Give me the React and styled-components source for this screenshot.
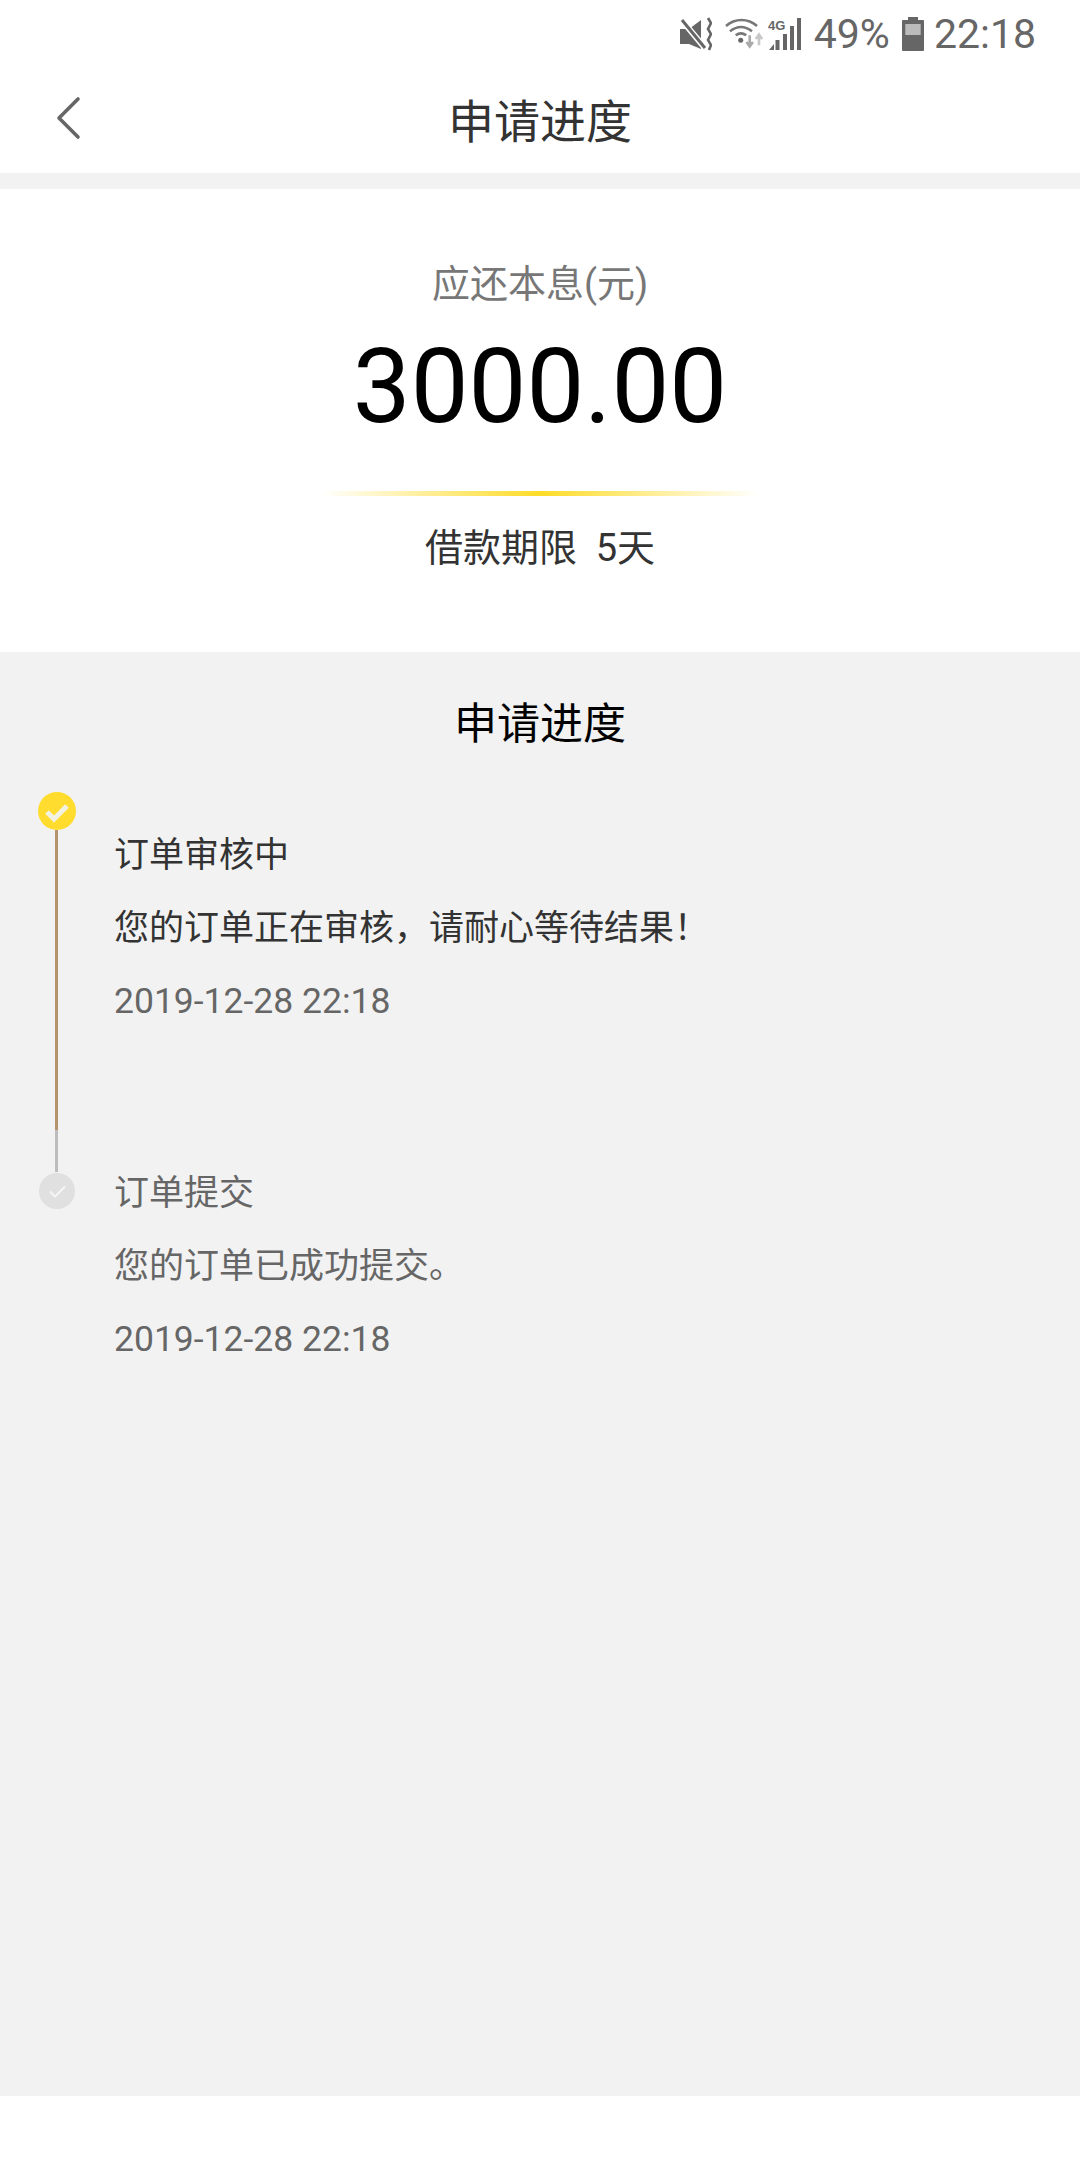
import React from 'react'
import styled, { createGlobalStyle } from 'styled-components'

const GlobalStyle = createGlobalStyle`
  html, body {
    margin: 0;
    padding: 0;
    background: #fff;
  }
  body {
    font-family: Roboto, "Noto Sans CJK SC", sans-serif;
  }
`

const Page = styled.div`
  width: 1080px;
  height: 2160px;
  display: flex;
  flex-direction: column;
  background: #fff;
  overflow: hidden;
`

const StatusBar = styled.div`
  height: 68px;
  display: flex;
  align-items: center;
  justify-content: flex-end;
  padding-right: 44px;
  color: #666;
  font-size: 41px;
  box-sizing: border-box;
`

const StatusText = styled.span`
  line-height: 68px;
  margin-left: ${(p) => p.$left || 0}px;
`

const StatusIcon = styled.svg`
  display: block;
  flex: none;
  margin-left: ${(p) => p.$left || 0}px;
`

const NavBar = styled.div`
  height: 105px;
  display: flex;
  align-items: center;
  justify-content: center;
  position: relative;
`

const BackIcon = styled.svg`
  position: absolute;
  left: 54px;
  top: 27px;
`

const NavTitle = styled.div`
  font-size: 46px;
  color: #333;
  line-height: 60px;
  margin-top: 2px;
`

const Gap = styled.div`
  height: 16px;
  background: #f2f2f2;
`

const Summary = styled.div`
  height: 463px;
  display: flex;
  flex-direction: column;
  align-items: center;
`

const SummaryLabel = styled.div`
  margin-top: 70px;
  font-size: 38px;
  line-height: 50px;
  color: #777;
`

const Amount = styled.div`
  margin-top: 18px;
  font-size: 103px;
  line-height: 120px;
  color: #000;
`

const Divider = styled.div`
  margin-top: 44px;
  width: 436px;
  height: 5px;
  background: linear-gradient(90deg, rgba(255, 220, 40, 0), #ffdc28 50%, rgba(255, 220, 40, 0));
`

const Term = styled.div`
  margin-top: 27px;
  font-size: 38px;
  line-height: 50px;
  color: #333;
  white-space: pre;
`

const Progress = styled.div`
  flex: 1;
  background: #f2f2f2;
  display: flex;
  flex-direction: column;
`

const ProgressTitle = styled.div`
  margin-top: 44px;
  text-align: center;
  font-size: 43px;
  line-height: 56px;
  color: #000;
`

const Timeline = styled.div`
  margin-top: 40px;
  display: flex;
  flex-direction: column;
`

const Step = styled.div`
  display: flex;
  height: ${(p) => p.$height}px;
`

const Rail = styled.div`
  width: 114px;
  flex: none;
  display: flex;
  flex-direction: column;
  align-items: center;
`

const Dot = styled.svg`
  display: block;
  flex: none;
`

const Line = styled.div`
  width: 3px;
  margin-right: 1px;
  flex: ${(p) => (p.$grow ? 1 : 'none')};
  height: ${(p) => p.$h || 0}px;
  margin-bottom: ${(p) => p.$bottom || 0}px;
  background: ${(p) => p.$color};
`

const StepBody = styled.div`
  display: flex;
  flex-direction: column;
  gap: 30px;
  margin-top: ${(p) => p.$top}px;
  color: ${(p) => (p.$active ? '#333' : '#666')};
  font-size: 35px;
  line-height: 43px;
`

const StepTime = styled.div`
  color: #666;
  font-size: 35.5px;
`

const Footer = styled.div`
  height: 64px;
  background: #fff;
`

const reviewText = '您的订单正在审核\uFF0C请耐心等待结果\uFF01'

const App = () => {
  return (
    <Page>
      <GlobalStyle />
      <StatusBar>
        <StatusIcon width="32" height="34" viewBox="0 0 32 34">
          <path d="M0 12h9L21 3v29L9 27H0z" fill="#666" />
          <path d="M0 1l25 30" stroke="#fff" strokeWidth="6" />
          <path d="M2 3l23 28" stroke="#666" strokeWidth="3" />
          <path d="M28 1l3 5-3 6 3 5-3 6 3 5-2 5" fill="none" stroke="#666" strokeWidth="2.6" />
        </StatusIcon>
        <StatusIcon $left={12} width="39" height="34" viewBox="0 0 39 34">
          <path d="M2 9c9-8 22-8 31 0M6 14.3c7-5.500 15-5.500 22 0M11.700 18.300c3.500-2.500 7-2.500 10.500 0" fill="none" stroke="#777" strokeWidth="2.6" />
          <circle cx="16.700" cy="23.300" r="2.500" fill="#666" />
          <path d="M25.700 18.300v10M22.500 25l3.200 4.500 3.200-4.500" fill="none" stroke="#aaa" strokeWidth="2.600" />
          <path d="M35 28.300v-10M31.800 22l3.200-4.500 3.200 4.500" fill="none" stroke="#c8c8c8" strokeWidth="2.600" />
        </StatusIcon>
        <StatusIcon $left={5} width="34" height="34" viewBox="0 0 34 34">
          <path d="M1 33l5-6v6z" fill="#666" />
          <rect x="7.500" y="23" width="4" height="10" fill="#666" />
          <rect x="15" y="17" width="4" height="16" fill="#666" />
          <rect x="22" y="9" width="4" height="24" fill="#666" />
          <rect x="29" y="1" width="4" height="32" fill="#666" />
          <text x="0" y="13" fontSize="13" fontWeight="700" fill="#666" fontFamily="Liberation Sans, sans-serif">4G</text>
        </StatusIcon>
        <StatusText $left={12}>49%</StatusText>
        <StatusIcon $left={12} width="22" height="34" viewBox="0 0 22 34">
          <rect x="6" y="0" width="10" height="4" fill="#666" />
          <rect x="0" y="3" width="22" height="31" rx="1" fill="#666" />
          <rect x="3.300" y="7" width="15.400" height="11" fill="#bbb" />
        </StatusIcon>
        <StatusText $left={10}>22:18</StatusText>
      </StatusBar>
      <NavBar>
        <BackIcon width="28" height="46" viewBox="0 0 28 46">
          <path d="M24 4L5 23l19 19" fill="none" stroke="#666" strokeWidth="3.6" strokeLinecap="round" strokeLinejoin="round" />
        </BackIcon>
        <NavTitle>申请进度</NavTitle>
      </NavBar>
      <Gap />
      <Summary>
        <SummaryLabel>应还本息(元)</SummaryLabel>
        <Amount>3000.00</Amount>
        <Divider />
        <Term>借款期限  5天</Term>
      </Summary>
      <Progress>
        <ProgressTitle>申请进度</ProgressTitle>
        <Timeline>
          <Step $height={381}>
            <Rail>
              <Dot width="38" height="38" viewBox="0 0 38 38">
                <circle cx="19" cy="19" r="19" fill="#ffdc2e" />
                <path d="M9 20l7 7 13-13" fill="none" stroke="#f2f2e2" strokeWidth="5" />
              </Dot>
              <Line $grow $color="#b4946c" />
              <Line $h={42} $bottom={1} $color="#bdbdbd" />
            </Rail>
            <StepBody $active $top={42}>
              <div>订单审核中</div>
              <div>{reviewText}</div>
              <StepTime>2019-12-28 22:18</StepTime>
            </StepBody>
          </Step>
          <Step $height={200}>
            <Rail>
              <Dot width="36" height="36" viewBox="0 0 36 36">
                <circle cx="18" cy="18" r="18" fill="#e0e0e0" />
                <path d="M11 18.500l5 5 10-10" fill="none" stroke="#f5f5f5" strokeWidth="2" />
              </Dot>
            </Rail>
            <StepBody $top={-1}>
              <div>订单提交</div>
              <div>您的订单已成功提交。</div>
              <StepTime>2019-12-28 22:18</StepTime>
            </StepBody>
          </Step>
        </Timeline>
      </Progress>
      <Footer />
    </Page>
  )
}

export default App
